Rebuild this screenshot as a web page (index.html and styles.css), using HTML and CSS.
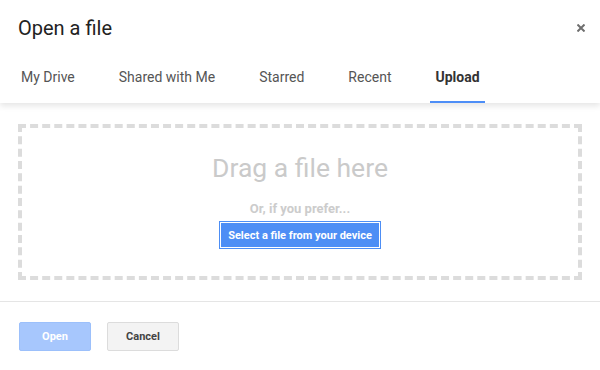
FILE: index.html
```html
<!DOCTYPE html>
<html>
<head>
<meta charset="utf-8">
<link rel="stylesheet" href="styles.css">
</head>
<body>
<div class="dialog">
  <div class="header">
    <div class="title-row">
      <div class="title">Open a file</div>
      <button class="close" aria-label="Close">
        <svg width="8" height="8" viewBox="0 0 8 8"><path d="M0.5 0.5 L7.5 7.5 M7.5 0.5 L0.5 7.5" stroke="#6f6f6f" stroke-width="2" fill="none"/></svg>
      </button>
    </div>
    <div class="tabs">
      <div class="tab">My Drive</div>
      <div class="tab">Shared with Me</div>
      <div class="tab">Starred</div>
      <div class="tab">Recent</div>
      <div class="tab active">Upload</div>
    </div>
  </div>
  <div class="content">
    <div class="dropzone">
      <div class="drag">Drag a file here</div>
      <div class="prefer">Or, if you prefer...</div>
      <button class="select">Select a file from your device</button>
    </div>
  </div>
  <div class="footer">
    <button class="btn open">Open</button>
    <button class="btn cancel">Cancel</button>
  </div>
</div>
</body>
</html>
```
FILE: styles.css
```css
html, body {
  margin: 0;
  padding: 0;
  background: #fff;
}
body {
  font-family: Roboto, "Liberation Sans", sans-serif;
}
.dialog {
  width: 600px;
  height: 370px;
  display: flex;
  flex-direction: column;
}
.header {
  padding: 14px 15px 0 18px;
  box-shadow: 0 3px 6px rgba(0, 0, 0, 0.1);
}
.title-row {
  display: flex;
  align-items: center;
  justify-content: space-between;
  height: 28px;
}
.title {
  font-size: 20px;
  line-height: 28px;
  color: #222;
}
.close {
  border: 0;
  background: none;
  padding: 0;
  width: 8px;
  height: 8px;
  display: flex;
}
.tabs {
  display: flex;
  gap: 34px;
  margin-left: -2px;
  margin-top: 25px;
}
.tab {
  font-size: 14px;
  line-height: 20px;
  color: #555;
  padding: 0 5px 14px;
  border-bottom: 2px solid transparent;
}
.tab.active {
  font-weight: bold;
  color: #333;
  border-bottom-color: #4d8ef7;
}
.content {
  padding: 21px 18px 0;
}
.dropzone {
  height: 148px;
  border: 4px dashed #dcdcdc;
  display: flex;
  flex-direction: column;
  align-items: center;
}
.drag {
  font-size: 26.5px;
  line-height: 30px;
  color: #cacaca;
  margin-top: 25px;
}
.prefer {
  font-size: 13px;
  font-weight: bold;
  line-height: 14px;
  color: #cccccc;
  margin-top: 19px;
}
.select {
  margin-top: 5px;
  height: 28px;
  width: 162px;
  padding: 0;
  border: 1px solid #4d8ef5;
  box-shadow: inset 0 0 0 1px #fff;
  background: #4d8ef5;
  color: #fff;
  font-family: Roboto, "Liberation Sans", sans-serif;
  font-size: 11px;
  font-weight: bold;
}
.footer {
  margin-top: 21px;
  border-top: 1px solid #e5e5e5;
  padding: 20px 19px 0;
  display: flex;
  gap: 16px;
}
.btn {
  width: 72px;
  height: 29px;
  padding: 0;
  border-radius: 2px;
  font-family: Roboto, "Liberation Sans", sans-serif;
  font-size: 11px;
  font-weight: bold;
}
.open {
  background: #a7c7fd;
  border: 1px solid #9cc0fb;
  color: #fff;
}
.cancel {
  background: #f3f3f3;
  border: 1px solid #dcdcdc;
  color: #444;
}
```
